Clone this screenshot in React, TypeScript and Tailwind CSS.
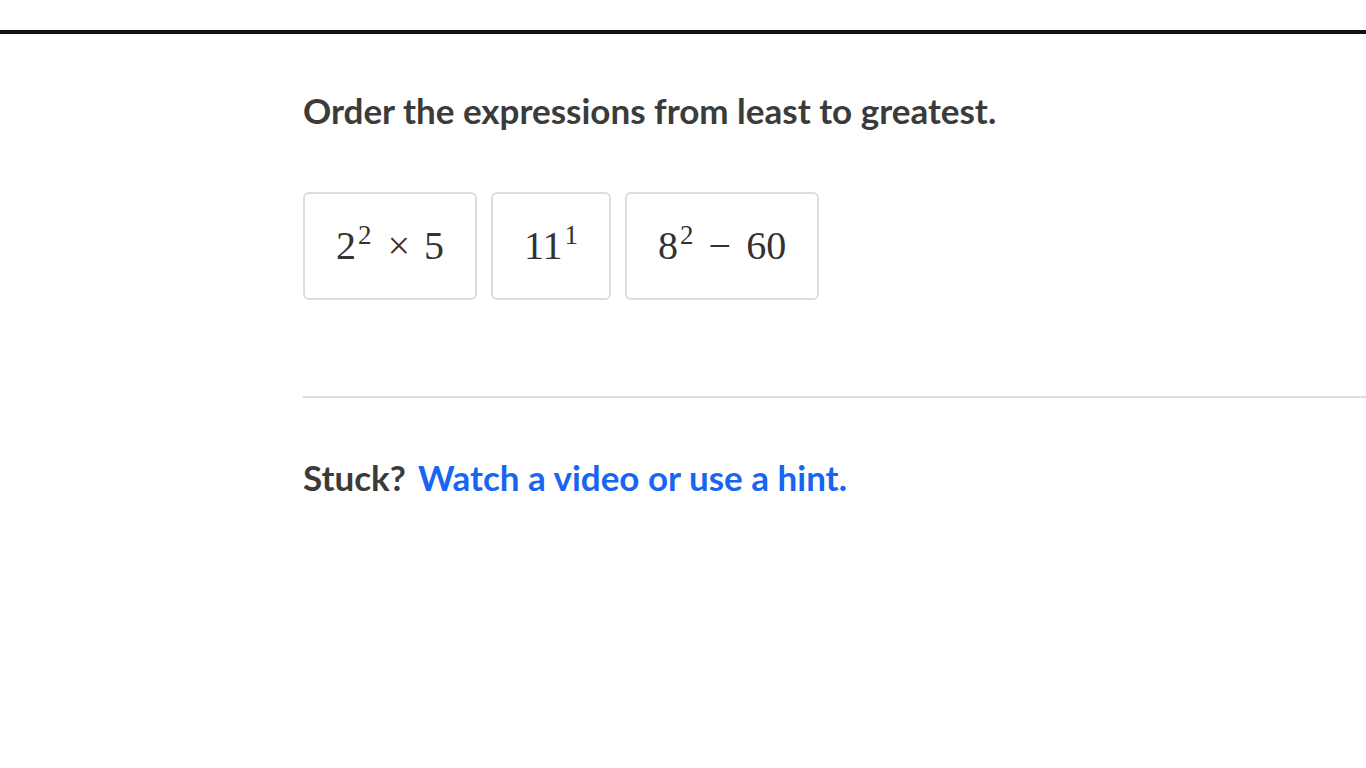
import React from "react";

const Tile = ({ children }: { children: React.ReactNode }) => (
  <div className="flex h-[108px] items-center justify-center rounded-[6px] border-2 border-[#dcdcdc] bg-white px-[31px] text-[40px] leading-none text-[#333] [font-family:'Liberation_Serif',serif]">
    {children}
  </div>
);

const Sup = ({ children }: { children: React.ReactNode }) => (
  <span className="relative top-[-15px] ml-[2px] text-[27px]">{children}</span>
);

export default function App() {
  return (
    <div className="min-h-[768px] w-[1366px] bg-white [font-family:Lato,'Noto_Sans',sans-serif]">
      <div className="h-[30px]" />
      <div className="h-[4px] w-full bg-[#111]" />
      <div className="pl-[303px]">
        <h1 className="mt-[56px] text-[35px] font-bold leading-[40px] text-[#3b3b3b]">
          Order the expressions from least to greatest.
        </h1>
        <div className="mt-[62px] flex gap-[14px]">
          <Tile>
            <span className="whitespace-nowrap">
              2<Sup>2</Sup>
              <span className="ml-[16px] mr-[14px]">×</span>5
            </span>
          </Tile>
          <Tile>
            <span className="whitespace-nowrap">
              11<Sup>1</Sup>
            </span>
          </Tile>
          <Tile>
            <span className="whitespace-nowrap">
              8<Sup>2</Sup>
              <span className="ml-[15px] mr-[15px]">−</span>60
            </span>
          </Tile>
        </div>
        <div className="mt-[96px] h-[2px] w-full bg-[#dddddd]" />
        <div className="mt-[59px] flex items-baseline gap-[12px] text-[35px] font-bold leading-[40px]">
          <span className="text-[#3b3b3b]">Stuck?</span>
          <span className="text-[#1865f2]">Watch a video or use a hint.</span>
        </div>
      </div>
    </div>
  );
}
